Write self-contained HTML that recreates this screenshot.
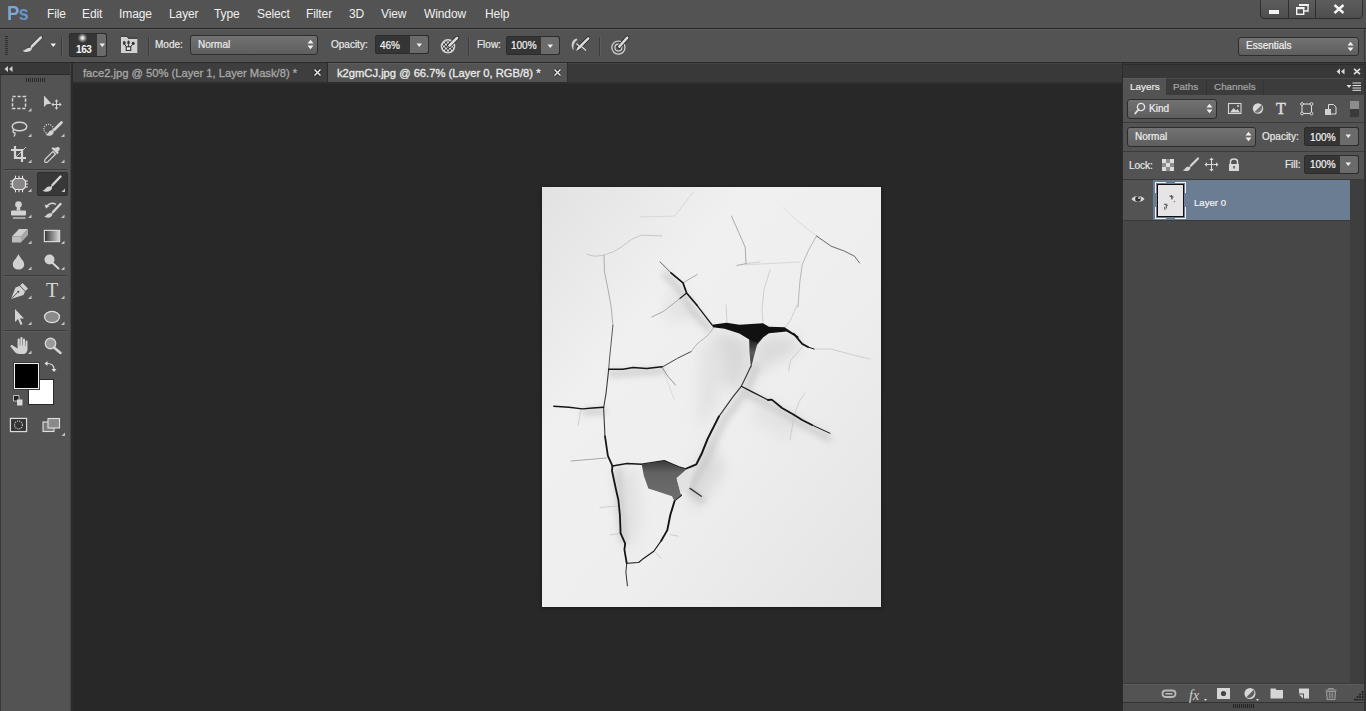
<!DOCTYPE html>
<html><head><meta charset="utf-8">
<style>
*{margin:0;padding:0;box-sizing:border-box}
html,body{width:1366px;height:711px;overflow:hidden;background:#282828;font-family:"Liberation Sans",sans-serif;color:#e6e6e6}
.a{position:absolute}
#menubar{left:0;top:0;width:1366px;height:28px;background:#535353}
#menuline{left:0;top:28px;width:1366px;height:1px;background:#262626}
#optbar{left:0;top:29px;width:1366px;height:33px;background:#535353;border-top:1px solid #5c5c5c}
#optline{left:0;top:62px;width:1366px;height:1px;background:#2a2a2a}
.mi{position:absolute;top:7px;font-size:12px;color:#f0f0f0;letter-spacing:-0.1px}
#tabbar{left:72px;top:63px;width:1050px;height:19px;background:#393939;border-top:1px solid #454545}
#toolpanel{left:0;top:63px;width:72px;height:648px;background:#535353}
#rightpanel{left:1122px;top:63px;width:244px;height:648px;background:#535353;border-top:1px solid #3a3a3a}
.lbl{font-size:10px;color:#e8e8e8;line-height:12px;white-space:nowrap;-webkit-text-stroke:0.2px currentColor}
.dd{background:linear-gradient(#727272,#5e5e5e);border:1px solid #2d2d2d;border-radius:3px}
.tabt{font-size:11.2px;line-height:13px;white-space:nowrap;-webkit-text-stroke:0.3px currentColor}
.ptab{font-size:9.9px;line-height:11px;white-space:nowrap;-webkit-text-stroke:0.2px currentColor}
#doc{left:542px;top:187px;width:339px;height:420px;background:#e4e4e4}
</style></head><body>
<div id="menubar" class="a">
  <div class="a" style="left:7px;top:2px;font-size:21px;line-height:22px;font-weight:bold;color:#7ea7d3;letter-spacing:-1px;transform:scaleX(0.88);transform-origin:0 0">P<span style="color:#6596c8">s</span></div>
  <span class="mi" style="left:47px">File</span>
  <span class="mi" style="left:82px">Edit</span>
  <span class="mi" style="left:119px">Image</span>
  <span class="mi" style="left:169px">Layer</span>
  <span class="mi" style="left:214px">Type</span>
  <span class="mi" style="left:257px">Select</span>
  <span class="mi" style="left:306px">Filter</span>
  <span class="mi" style="left:349px">3D</span>
  <span class="mi" style="left:381px">View</span>
  <span class="mi" style="left:424px">Window</span>
  <span class="mi" style="left:485px">Help</span>
</div>
<div id="menuline" class="a"></div>
<div id="optbar" class="a"></div>
<div class="a" style="left:0;top:29px;width:1366px;height:1px;background:#5e5e5e"></div>
<!-- grip -->
<div class="a" style="left:5px;top:36px;width:3px;height:20px;background:repeating-linear-gradient(to bottom,#2e2e2e 0 1px,transparent 1px 2px)"></div>
<!-- brush tool icon -->
<svg class="a" style="left:16px;top:32px" width="30" height="24" viewBox="16 32 30 24">
 <path d="M40.8 37.5 L31.5 46.8" stroke="#222" stroke-width="3.6" stroke-linecap="round"/>
 <path d="M40.8 37.5 L31.8 46.5" stroke="#d8d8d8" stroke-width="2.6" stroke-linecap="round"/>
 <path d="M31.5 46.5 L29.8 48 C28 47.8 26.5 48.5 25.5 49.5 C24.7 50.2 23.6 50.6 22.7 50.7 C24.5 52.3 28.5 52.4 30.8 50.5 C31.8 49.6 32.2 48.3 31.8 47 Z" fill="#d8d8d8"/>
</svg>
<svg class="a" style="left:50px;top:43px" width="7" height="5" viewBox="0 0 7 5"><path d="M0.5 0.5 H6 L3.25 4 Z" fill="#f0f0f0"/></svg>
<div class="a" style="left:61px;top:37px;width:1px;height:19px;background:#3c3c3c"></div>
<div class="a" style="left:62px;top:37px;width:1px;height:19px;background:#5d5d5d"></div>
<!-- brush size box -->
<div class="a" style="left:69px;top:33px;width:38px;height:24px;background:#353535;border-radius:2px;border:1px solid #2c2c2c"></div>
<div class="a" style="left:97px;top:34px;width:9px;height:22px;background:#6b6b6b;border-radius:0 2px 2px 0"></div>
<svg class="a" style="left:99px;top:43px" width="7" height="5" viewBox="0 0 7 5"><path d="M0.5 0.5 H6 L3.25 4 Z" fill="#f0f0f0"/></svg>
<div class="a" style="left:77px;top:33px;width:11px;height:10px;background:radial-gradient(circle at 50% 50%,#ffffff 0,#cfcfcf 1.5px,#7a7a7a 3px,rgba(53,53,53,0) 5px)"></div>
<div class="a" style="left:76px;top:45px;font-size:10px;font-weight:bold;color:#f4f4f4;line-height:10px;letter-spacing:-0.4px">163</div>
<!-- folder/brush panel icon -->
<svg class="a" style="left:112px;top:30px" width="30" height="30" viewBox="112 30 30 30">
 <path d="M121 36.3 H127 L128.3 38.3 H137.3 V53 H121 Z" fill="#d2d2d2"/>
 <path d="M121 36.3 H127 L128.3 38.3 H137.3" fill="none" stroke="#1e1e1e" stroke-width="0.9"/>
 <ellipse cx="124.3" cy="43" rx="1.4" ry="1.9" fill="#333"/>
 <ellipse cx="128.5" cy="42.6" rx="1.2" ry="2" fill="#333"/>
 <ellipse cx="133.2" cy="43.4" rx="1.5" ry="1.7" fill="#333"/>
 <path d="M124.8 44.5 L126.6 46.8 M128.5 44.5 V46.8 M132.3 44.8 L130.4 46.8" stroke="#2a2a2a" stroke-width="1"/>
 <rect x="126.2" y="46.8" width="4.6" height="3.6" fill="#e8e8e8" stroke="#222" stroke-width="1"/>
</svg>
<div class="a" style="left:148px;top:37px;width:1px;height:19px;background:#3c3c3c"></div>
<div class="a" style="left:149px;top:37px;width:1px;height:19px;background:#5d5d5d"></div>
<div class="a lbl" style="left:155px;top:39px">Mode:</div>
<div class="a dd" style="left:190px;top:35px;width:128px;height:20px"></div>
<div class="a lbl" style="left:198px;top:39px;color:#ececec">Normal</div>
<svg class="a" style="left:307px;top:39px" width="7" height="11" viewBox="0 0 7 11"><path d="M0.5 4.5 L3.5 0.8 L6.5 4.5 Z M0.5 6.5 L3.5 10.2 L6.5 6.5 Z" fill="#efefef"/></svg>
<div class="a lbl" style="left:331px;top:39px">Opacity:</div>
<div class="a" style="left:375px;top:35px;width:54px;height:19px;background:#353535;border-radius:2px;border:1px solid #2c2c2c"></div>
<div class="a" style="left:410px;top:36px;width:18px;height:17px;background:#6b6b6b;border-radius:0 2px 2px 0"></div>
<svg class="a" style="left:416px;top:43px" width="7" height="5" viewBox="0 0 7 5"><path d="M0.5 0.5 H6 L3.25 4 Z" fill="#f0f0f0"/></svg>
<div class="a lbl" style="left:380px;top:40px;color:#f4f4f4">46%</div>
<!-- pressure opacity icon -->
<svg class="a" style="left:440px;top:36px" width="20" height="19" viewBox="0 0 20 19">
 <defs><pattern id="chk" x="1" y="3.5" width="4" height="4" patternUnits="userSpaceOnUse"><rect width="4" height="4" fill="#3a3a3a"/><rect width="2" height="2" fill="#d8d8d8"/><rect x="2" y="2" width="2" height="2" fill="#d8d8d8"/></pattern></defs>
 <circle cx="8" cy="10.3" r="6.6" fill="url(#chk)" stroke="#d6d6d6" stroke-width="1.4"/>
 <path d="M17 2 L9.5 9.5" stroke="#1e1e1e" stroke-width="4.2" stroke-linecap="round"/>
 <path d="M17 2 L9.5 9.5" stroke="#dadada" stroke-width="2.8" stroke-linecap="round"/>
</svg>
<div class="a" style="left:468px;top:37px;width:1px;height:19px;background:#3c3c3c"></div>
<div class="a" style="left:469px;top:37px;width:1px;height:19px;background:#5d5d5d"></div>
<div class="a lbl" style="left:477px;top:39px">Flow:</div>
<div class="a" style="left:506px;top:36px;width:54px;height:19px;background:#353535;border-radius:2px;border:1px solid #2c2c2c"></div>
<div class="a" style="left:541px;top:37px;width:18px;height:17px;background:#6b6b6b;border-radius:0 2px 2px 0"></div>
<svg class="a" style="left:547px;top:44px" width="7" height="5" viewBox="0 0 7 5"><path d="M0.5 0.5 H6 L3.25 4 Z" fill="#f0f0f0"/></svg>
<div class="a lbl" style="left:511px;top:40px;color:#f4f4f4">100%</div>
<!-- airbrush icon -->
<svg class="a" style="left:565px;top:32px" width="30" height="24" viewBox="565 32 30 24">
 <path d="M576.5 38.5 C571.5 39.5 570 46.5 573.8 50.5 C572.8 46.5 573.8 42 577.5 40 Z" fill="#d0d0d0"/>
 <path d="M588.3 38.3 L578 48.6" stroke="#1e1e1e" stroke-width="4" stroke-linecap="round"/>
 <path d="M588.3 38.3 L578 48.6" stroke="#dcdcdc" stroke-width="2.6" stroke-linecap="round"/>
 <path d="M576.5 43.5 L581 48 M576.5 50.5 L583.5 43.5 M581.5 46.5 L586 50.5" stroke="#dcdcdc" stroke-width="1.1"/>
</svg>
<div class="a" style="left:599px;top:37px;width:1px;height:19px;background:#3c3c3c"></div>
<div class="a" style="left:600px;top:37px;width:1px;height:19px;background:#5d5d5d"></div>
<!-- pressure size icon -->
<svg class="a" style="left:605px;top:32px" width="30" height="24" viewBox="605 32 30 24">
 <circle cx="618.4" cy="47.6" r="6.6" fill="none" stroke="#d6d6d6" stroke-width="1.2"/>
 <circle cx="618.4" cy="47.6" r="3.5" fill="none" stroke="#d6d6d6" stroke-width="1.2"/>
 <path d="M627.3 37.6 L619.3 46.6" stroke="#1e1e1e" stroke-width="4" stroke-linecap="round"/>
 <path d="M627.3 37.6 L619.3 46.6" stroke="#dcdcdc" stroke-width="2.6" stroke-linecap="round"/>
</svg>
<!-- essentials -->
<div class="a dd" style="left:1238px;top:37px;width:121px;height:19px"></div>
<div class="a lbl" style="left:1246px;top:40px;color:#f0f0f0">Essentials</div>
<svg class="a" style="left:1347px;top:41px" width="7" height="11" viewBox="0 0 7 11"><path d="M0.5 4.5 L3.5 0.8 L6.5 4.5 Z M0.5 6.5 L3.5 10.2 L6.5 6.5 Z" fill="#efefef"/></svg>
<div class="a" style="left:1364px;top:29px;width:1px;height:33px;background:#3a3a3a"></div>
<!-- window controls -->
<div class="a" style="left:1260px;top:-3px;width:103px;height:22px;border:1px solid #2e2e2e;border-radius:0 0 4px 4px;background:linear-gradient(#5e5e5e,#4e4e4e)"></div>
<div class="a" style="left:1288px;top:0;width:1px;height:18px;background:#2e2e2e"></div>
<div class="a" style="left:1315px;top:0;width:1px;height:18px;background:#2e2e2e"></div>
<div class="a" style="left:1269px;top:10px;width:10px;height:4px;background:#f2f2f2"></div>
<svg class="a" style="left:1290px;top:0" width="24" height="18" viewBox="1290 0 24 18"><path d="M1299.7 4.7 H1308 V11 H1303.5" fill="none" stroke="#f2f2f2" stroke-width="1.4"/><rect x="1299" y="4" width="9.7" height="2" fill="#f2f2f2"/><rect x="1296.7" y="7.7" width="7" height="6.6" fill="none" stroke="#f2f2f2" stroke-width="1.4"/><rect x="1296" y="7" width="8.4" height="2.2" fill="#f2f2f2"/></svg>
<svg class="a" style="left:1333px;top:4px" width="12" height="10" viewBox="0 0 12 10"><path d="M1.5 1 L10.5 9 M10.5 1 L1.5 9" stroke="#f4f4f4" stroke-width="2.4"/></svg>

<div id="optline" class="a"></div>
<div id="tabbar" class="a"></div>
<div class="a" style="left:72px;top:63px;width:255px;height:19px;background:#3e3e3e;border-left:1px solid #2f2f2f"></div>
<div class="a" style="left:327px;top:63px;width:1px;height:19px;background:#2c2c2c"></div>
<div class="a" style="left:328px;top:63px;width:239px;height:19px;background:#535353;border-top:1px solid #5e5e5e"></div>
<div class="a" style="left:567px;top:63px;width:1px;height:19px;background:#2e2e2e"></div>
<div class="a" style="left:72px;top:82px;width:1050px;height:2px;background:#2e2e2e"></div>
<div class="a tabt" style="left:83px;top:67px;color:#a8a8a8">face2.jpg @ 50% (Layer 1, Layer Mask/8) *</div>
<div class="a tabt" style="left:337px;top:67px;color:#ececec">k2gmCJ.jpg @ 66.7% (Layer 0, RGB/8) *</div>
<svg class="a" style="left:313px;top:68px" width="9" height="9" viewBox="0 0 9 9"><path d="M1.5 1.5 L7.5 7.5 M7.5 1.5 L1.5 7.5" stroke="#111" stroke-width="2.6"/><path d="M1.5 1.5 L7.5 7.5 M7.5 1.5 L1.5 7.5" stroke="#e8e8e8" stroke-width="1.6"/></svg>
<svg class="a" style="left:553px;top:68px" width="9" height="9" viewBox="0 0 9 9"><path d="M1.5 1.5 L7.5 7.5 M7.5 1.5 L1.5 7.5" stroke="#111" stroke-width="2.6"/><path d="M1.5 1.5 L7.5 7.5 M7.5 1.5 L1.5 7.5" stroke="#e8e8e8" stroke-width="1.6"/></svg>

<div id="toolpanel" class="a"></div>
<div class="a" style="left:0;top:63px;width:72px;height:12px;background:#383838;border-bottom:1px solid #2a2a2a"></div>
<div class="a" style="left:0;top:75px;width:1px;height:636px;background:#3a3a3a"></div>
<div class="a" style="left:70px;top:63px;width:1px;height:648px;background:#454545"></div>
<div class="a" style="left:71px;top:63px;width:2px;height:648px;background:#2c2c2c"></div>
<svg class="a" style="left:4px;top:66px" width="9" height="6" viewBox="0 0 9 6"><path d="M4 0 V6 L0.5 3 Z M8.5 0 V6 L5 3 Z" fill="#d0d0d0"/></svg>
<div class="a" style="left:26px;top:78px;width:20px;height:4px;background:repeating-linear-gradient(to right,#2a2a2a 0 1px,transparent 1px 2px)"></div>
<div class="a" style="left:4px;top:169px;width:63px;height:1px;background:#3a3a3a"></div>
<div class="a" style="left:4px;top:170px;width:63px;height:1px;background:#5c5c5c"></div>
<div class="a" style="left:4px;top:275px;width:63px;height:1px;background:#3a3a3a"></div>
<div class="a" style="left:4px;top:276px;width:63px;height:1px;background:#5c5c5c"></div>
<div class="a" style="left:4px;top:330px;width:63px;height:1px;background:#3a3a3a"></div>
<div class="a" style="left:4px;top:331px;width:63px;height:1px;background:#5c5c5c"></div>
<div class="a" style="left:37px;top:172px;width:31px;height:24px;background:#383838;border-radius:2px;border:1px solid #303030"></div>
<svg class="a" style="left:0;top:0" width="72" height="450" viewBox="0 0 72 450">
 <g fill="none" stroke="#d6d6d6">
  <rect x="12.5" y="96.5" width="13" height="12" stroke-width="1.5" stroke-dasharray="3.2 1.8"/>
  <path d="M56.5 100.5 V108.5 M52.5 104.5 H60.5" stroke-width="1.1"/>
  <ellipse cx="19.5" cy="126.5" rx="7.3" ry="4.3" stroke-width="1.4"/>
  <path d="M14 129.5 C12 131 13 133 15 133 C15.5 134 14.5 135.5 14 136.5" stroke-width="1.3"/>
  <circle cx="48.5" cy="129" r="4.6" stroke-width="1.3" stroke-dasharray="1.1 1.2"/>
  <path d="M15 146 V158 H26 M11 150 H22 V162" stroke-width="2.2"/>
  <path d="M16 157 L26 147" stroke-width="0.9"/>
  <path d="M13 218 H25.5" stroke-width="1.2"/>
  <rect x="44.5" y="230.5" width="15" height="11" stroke-width="1.4"/>
  <path d="M50 113 Z" />
  <rect x="10.5" y="418.5" width="16" height="13" stroke-width="1.3"/>
  <circle cx="18.5" cy="425" r="4" stroke-width="1.2" stroke-dasharray="1 1.1"/>
  <path d="M51 359.5 H47 M47 359.5 L49 357.5 M47 359.5 L49 361.5" stroke-width="0"/>
 </g>
 <g fill="#d2d2d2">
  <path d="M44 95.5 L44 107 L46.8 104.3 L51.5 103.8 Z"/>
  <path d="M56.5 99.3 L54.6 101.5 H58.4 Z M56.5 109.7 L54.6 107.5 H58.4 Z M51.3 104.5 L53.5 102.6 V106.4 Z M61.7 104.5 L59.5 102.6 V106.4 Z"/>
  <!-- quick select brush -->
  <path d="M61.5 122.5 L54.5 129.5" stroke="#d6d6d6" stroke-width="2.6" stroke-linecap="round"/>
  <path d="M54.5 128.5 L52.5 130.5 C51 130 49.5 131 48.5 132.5 C47.8 133.8 46.5 134.6 45.5 134.8 C48 136.6 51.5 136 53 134 C53.6 133 53.8 132 53.6 131.3 Z"/>
  <!-- eyedropper -->
  <path d="M56.5 147.5 C58.5 146 60.8 148.3 59.3 150.3 L57.8 151.8 L58.8 152.8 L57.3 154.3 L51.5 148.5 L53 147 L54 148 Z"/>
  <path d="M52.8 151.5 L55.5 154.2 L48 161.7 C47 162.7 45.3 162.7 45 162 C44.5 161.5 44.5 160.5 45.3 159 Z" fill="none" stroke="#d6d6d6" stroke-width="1.2"/>
  <!-- healing -->
  <path d="M15 178.5 H23 L25.5 181 V187 L23 189.5 H15 L12.5 187 V181 Z" fill="#8a8585" stroke="#e6e6e6" stroke-width="1.2"/>
  <path d="M15.5 175.8 V178.5 M19 175.8 V178.5 M22.5 175.8 V178.5 M15.5 189.5 V192.2 M19 189.5 V192.2 M22.5 189.5 V192.2 M10 181 H12.5 M10 184 H12.5 M10 187 H12.5 M25.5 181 H28 M25.5 184 H28 M25.5 187 H28" stroke="#e6e6e6" stroke-width="1.1" fill="none"/>
  <!-- brush selected -->
  <path d="M60.5 176.5 L52.5 185" stroke="#d6d6d6" stroke-width="2.4" stroke-linecap="round"/>
  <path d="M53 184 L50.3 186.7 C49 186 47 186.5 46 188 C45 189.5 43.7 190.2 42.5 190.4 C45 192.3 49.5 192.2 51.3 189.8 C52 188.8 52.3 187.8 52 187 Z"/>
  <!-- stamp -->
  <circle cx="18.5" cy="204.5" r="3.3"/>
  <path d="M17 207 H20 L20.5 210.5 H16.5 Z"/>
  <rect x="11" y="210.5" width="15" height="5" rx="1"/>
  <!-- history brush -->
  <path d="M60.5 204 L53 212" stroke="#d6d6d6" stroke-width="2.4" stroke-linecap="round"/>
  <path d="M53.3 211.2 L51 213.4 C49.8 212.8 48 213.3 47 214.6 C46.2 215.8 45 216.4 44 216.6 C46.3 218.3 50.2 218.1 51.8 216 C52.4 215.2 52.6 214.3 52.4 213.6 Z"/>
  <path d="M56 204.5 C53 202.5 48.5 203 46.5 206.5" stroke="#d6d6d6" stroke-width="1.4" fill="none"/>
  <path d="M44.5 204.5 L46 208.5 L49.5 206 Z"/>
  <!-- eraser -->
  <path d="M12 236.5 L19 229 H28 L21 236.5 Z" fill="#cfcfcf"/>
  <path d="M12 236.5 H21 V242.5 H12 Z" fill="#bdbdbd"/>
  <path d="M21 236.5 L28 229 V235 L21 242.5 Z" fill="#a8a8a8"/>
  <!-- drop -->
  <path d="M18.5 254 C17 258 12.8 261 12.8 264.2 C12.8 267.5 15.5 269.5 18.5 269.5 C21.5 269.5 24.2 267.5 24.2 264.2 C24.2 261 20 258 18.5 254 Z"/>
  <!-- dodge -->
  <circle cx="49.5" cy="259.5" r="5"/>
  <path d="M52 262.5 L58.5 268.5" stroke="#d6d6d6" stroke-width="2" stroke-linecap="round"/>
  <!-- pen -->
  <path d="M22.5 283 L28 288.5 L25.5 291 L20 285.5 Z"/>
  <path d="M19.5 286 L25 291.5 L23.5 295 L11 299 L15.5 287.5 Z"/>
  <path d="M11.5 298.5 L17.8 292.2" stroke="#555" stroke-width="0.9"/>
  <circle cx="18.3" cy="291.7" r="1" fill="#444"/>
  <!-- arrow -->
  <path d="M15 309 V322 L18 319 L20.5 325 L22.5 324 L20 318.5 H24 Z"/>
  <!-- ellipse -->
  <ellipse cx="52" cy="317" rx="7.5" ry="5.6" fill="#8a8a8a" stroke="#e2e2e2" stroke-width="1.2"/>
  <!-- hand -->
  <path d="M13.5 346 C12 344 10 345 10.5 346.5 L14.5 351.5 C15.5 353 17 354 19.5 354 H23 C25.5 354 27.5 352 27.5 349 V341.5 C27.5 340 25.5 340 25.5 341.5 V346 H25 V339.5 C25 338 23 338 23 339.5 V345.5 H22.5 V338.3 C22.5 336.7 20.3 336.7 20.3 338.3 V345.5 H19.8 V339.5 C19.8 338 17.6 338 17.6 339.5 V348.5 Z"/>
  <!-- zoom -->
  <circle cx="50.5" cy="343.5" r="5.2" fill="#9a9a9a" stroke="#d6d6d6" stroke-width="1.4"/>
  <path d="M54 347.5 L60.5 353" stroke="#d6d6d6" stroke-width="2.4" stroke-linecap="round"/>
  <!-- swap arrows -->
  <path d="M47 363.5 C51 363.5 54 365.5 54 369" stroke="#e0e0e0" stroke-width="1.2" fill="none"/>
  <path d="M44.5 363.5 L47.5 361 V366 Z M54 372 L51.5 369 H56.5 Z" fill="#e0e0e0"/>
  <!-- screen mode -->
  <rect x="43" y="422" width="11" height="9.5" fill="#7a7a7a" stroke="#e0e0e0" stroke-width="1.1"/>
  <rect x="48" y="418.5" width="11.5" height="9.5" fill="#8a8a8a" stroke="#e0e0e0" stroke-width="1.1"/>
 </g>
 <path d="M13.5 395.5 H19 V401 H13.5 Z" fill="#222" stroke="#ddd" stroke-width="0.8"/>
 <path d="M17 399.5 H22.5 V405.5 H17 Z" fill="#d8d8d8"/>
 <rect x="11" y="419" width="15" height="12" fill="#333" />
 <rect x="10.5" y="418.5" width="16" height="13" fill="none" stroke="#dcdcdc" stroke-width="1.1"/>
 <circle cx="18.5" cy="425" r="4" fill="none" stroke="#e0e0e0" stroke-width="1.1" stroke-dasharray="1 1.1"/>
 <path d="M31.5 111.5 L31.5 108.0 L28.0 111.5 Z" fill="#c4c4c4"/><path d="M31.5 137 L31.5 133.5 L28.0 137 Z" fill="#c4c4c4"/><path d="M31.5 163 L31.5 159.5 L28.0 163 Z" fill="#c4c4c4"/><path d="M31.5 192 L31.5 188.5 L28.0 192 Z" fill="#c4c4c4"/><path d="M64.5 137 L64.5 133.5 L61.0 137 Z" fill="#c4c4c4"/><path d="M64.5 163 L64.5 159.5 L61.0 163 Z" fill="#c4c4c4"/><path d="M65 192 L65 188.5 L61.5 192 Z" fill="#c4c4c4"/><path d="M31.5 218 L31.5 214.5 L28.0 218 Z" fill="#c4c4c4"/><path d="M64.5 218 L64.5 214.5 L61.0 218 Z" fill="#c4c4c4"/><path d="M31.5 244 L31.5 240.5 L28.0 244 Z" fill="#c4c4c4"/><path d="M64.5 244 L64.5 240.5 L61.0 244 Z" fill="#c4c4c4"/><path d="M31.5 270 L31.5 266.5 L28.0 270 Z" fill="#c4c4c4"/><path d="M64.5 270 L64.5 266.5 L61.0 270 Z" fill="#c4c4c4"/><path d="M31.5 299 L31.5 295.5 L28.0 299 Z" fill="#c4c4c4"/><path d="M64.5 299 L64.5 295.5 L61.0 299 Z" fill="#c4c4c4"/><path d="M31.5 325 L31.5 321.5 L28.0 325 Z" fill="#c4c4c4"/><path d="M64.5 325 L64.5 321.5 L61.0 325 Z" fill="#c4c4c4"/><path d="M31.5 354 L31.5 350.5 L28.0 354 Z" fill="#c4c4c4"/><path d="M65 436 L65 432.5 L61.5 436 Z" fill="#c4c4c4"/>
</svg>
<!-- gradient fill -->
<div class="a" style="left:45px;top:231px;width:14px;height:10px;background:linear-gradient(to right,#3a3a3a,#d0d0d0)"></div>
<div class="a" style="left:46px;top:280px;font-family:'Liberation Serif',serif;font-size:20px;line-height:20px;color:#d6d6d6">T</div>
<!-- colors -->
<div class="a" style="left:28px;top:379px;width:26px;height:26px;background:#fff;border:1px solid #2a2a2a"></div>
<div class="a" style="left:13px;top:362px;width:27px;height:28px;background:#000;border:1px solid #3a3a3a;box-shadow:inset 0 0 0 1px #f0f0f0"></div>

<div id="rightpanel" class="a"></div>
<div class="a" style="left:1122px;top:63px;width:1px;height:648px;background:#2c2c2c"></div>
<div class="a" style="left:1123px;top:64px;width:241px;height:14px;background:#383838;border-top:1px solid #2c2c2c"></div>
<div class="a" style="left:1123px;top:78px;width:241px;height:17px;background:#3c3c3c;border-top:1px solid #4a4a4a"></div>
<div class="a" style="left:1123px;top:78px;width:43px;height:17px;background:#535353;border-top:1px solid #5c5c5c"></div>
<div class="a" style="left:1206px;top:79px;width:1px;height:16px;background:#333"></div>
<div class="a" style="left:1263px;top:79px;width:1px;height:16px;background:#333"></div>
<div class="a" style="left:1364px;top:63px;width:2px;height:648px;background:#333"></div>
<div class="a ptab" style="left:1130px;top:81px;color:#ececec">Layers</div>
<div class="a ptab" style="left:1173px;top:81px;color:#a6a6a6">Paths</div>
<div class="a ptab" style="left:1214px;top:81px;color:#a6a6a6">Channels</div>
<svg class="a" style="left:1336px;top:68px" width="9" height="7" viewBox="0 0 9 7"><path d="M4 0.5 V6.5 L0.5 3.5 Z M8.5 0.5 V6.5 L5 3.5 Z" fill="#d8d8d8"/></svg>
<svg class="a" style="left:1353px;top:68px" width="8" height="7" viewBox="0 0 8 7"><path d="M1 0.8 L7 6.2 M7 0.8 L1 6.2" stroke="#e0e0e0" stroke-width="1.6"/></svg>
<svg class="a" style="left:1346px;top:82px" width="16" height="9" viewBox="0 0 16 9"><path d="M0.5 3 H5.5 L3 6 Z" fill="#e0e0e0"/><path d="M6.5 1 H15 M6.5 3.5 H15 M6.5 6 H15 M6.5 8.3 H15" stroke="#e0e0e0" stroke-width="1"/></svg>
<!-- filter row -->
<div class="a" style="left:1123px;top:122px;width:241px;height:1px;background:#3a3a3a"></div>
<div class="a dd" style="left:1127px;top:99px;width:90px;height:20px"></div>
<svg class="a" style="left:1134px;top:102px" width="12" height="13" viewBox="0 0 12 13"><circle cx="7" cy="5" r="3.6" fill="none" stroke="#e6e6e6" stroke-width="1.4"/><path d="M4.5 7.5 L1.2 11.5" stroke="#e6e6e6" stroke-width="1.8" stroke-linecap="round"/></svg>
<div class="a lbl" style="left:1149px;top:103px;color:#efefef">Kind</div>
<svg class="a" style="left:1206px;top:103px" width="7" height="11" viewBox="0 0 7 11"><path d="M0.5 4.5 L3.5 0.8 L6.5 4.5 Z M0.5 6.5 L3.5 10.2 L6.5 6.5 Z" fill="#efefef"/></svg>
<svg class="a" style="left:1222px;top:98px" width="142" height="22" viewBox="1222 98 142 22">
 <rect x="1228.5" y="103.5" width="12.5" height="10" fill="none" stroke="#d8d8d8" stroke-width="1.1"/>
 <path d="M1230 112.5 L1233.5 108 L1236 110.5 L1237.5 109 L1240 112.5 Z" fill="#d8d8d8"/>
 <circle cx="1238" cy="106" r="1" fill="#d8d8d8"/>
 <circle cx="1258" cy="108.5" r="5.2" fill="#d8d8d8"/>
 <path d="M1254.5 112 L1261.5 105 A5.2 5.2 0 0 1 1254.5 112 Z" fill="#707070"/>
 <text x="1276" y="114" font-family="Liberation Serif" font-size="16" fill="#e0e0e0" stroke="#e0e0e0" stroke-width="0.4">T</text>
 <rect x="1302" y="104" width="9.5" height="9.5" fill="none" stroke="#d8d8d8" stroke-width="1.1"/>
 <circle cx="1302" cy="104" r="1.4" fill="#535353" stroke="#e0e0e0" stroke-width="0.9"/>
 <circle cx="1311.5" cy="104" r="1.4" fill="#535353" stroke="#e0e0e0" stroke-width="0.9"/>
 <circle cx="1302" cy="113.5" r="1.4" fill="#535353" stroke="#e0e0e0" stroke-width="0.9"/>
 <circle cx="1311.5" cy="113.5" r="1.4" fill="#535353" stroke="#e0e0e0" stroke-width="0.9"/>
 <path d="M1328.5 109 V104.5 H1333.5 L1336 107 V114 H1331" fill="none" stroke="#dcdcdc" stroke-width="1"/>
 <rect x="1325" y="109" width="6" height="6" fill="#d0d0d0"/>
 <rect x="1350" y="101" width="9" height="8" fill="#8c8c8c"/>
 <rect x="1350" y="109" width="9" height="8" fill="#3a3a3a"/>
</svg>
<!-- blend row -->
<div class="a dd" style="left:1127px;top:127px;width:129px;height:20px"></div>
<div class="a lbl" style="left:1135px;top:131px;color:#efefef">Normal</div>
<svg class="a" style="left:1245px;top:131px" width="7" height="11" viewBox="0 0 7 11"><path d="M0.5 4.5 L3.5 0.8 L6.5 4.5 Z M0.5 6.5 L3.5 10.2 L6.5 6.5 Z" fill="#efefef"/></svg>
<div class="a lbl" style="left:1262px;top:131px">Opacity:</div>
<div class="a" style="left:1304px;top:127px;width:55px;height:19px;background:#353535;border-radius:2px;border:1px solid #2c2c2c"></div>
<div class="a" style="left:1340px;top:128px;width:18px;height:17px;background:#6b6b6b;border-radius:0 2px 2px 0"></div>
<svg class="a" style="left:1345px;top:134px" width="7" height="5" viewBox="0 0 7 5"><path d="M0.5 0.5 H6 L3.25 4 Z" fill="#f0f0f0"/></svg>
<div class="a lbl" style="left:1310px;top:132px;color:#f4f4f4">100%</div>
<div class="a" style="left:1123px;top:151px;width:241px;height:1px;background:#3a3a3a"></div>
<!-- lock row -->
<div class="a lbl" style="left:1129px;top:160px">Lock:</div>
<svg class="a" style="left:1160px;top:156px" width="82" height="18" viewBox="1160 156 82 18">
 <rect x="1162" y="159" width="12" height="12" fill="#8c8c8c"/><path d="M1162 159 h4 v4 h-4 Z M1170 159 h4 v4 h-4 Z M1166 163 h4 v4 h-4 Z M1162 167 h4 v4 h-4 Z M1170 167 h4 v4 h-4 Z" fill="#dcdcdc"/>
 <path d="M1198 158.5 L1191 165.5" stroke="#d6d6d6" stroke-width="2.2" stroke-linecap="round"/>
 <path d="M1191.5 164.7 L1189.3 167 C1188 166.5 1186.3 167 1185.4 168.2 C1184.6 169.3 1183.5 169.9 1182.5 170 C1184.6 171.6 1188.3 171.5 1189.8 169.5 C1190.4 168.7 1190.6 167.8 1190.4 167.2 Z" fill="#d6d6d6"/>
 <path d="M1211.5 158 V171 M1205 164.5 H1218" stroke="#d8d8d8" stroke-width="1.1"/>
 <path d="M1211.5 157.5 L1209.3 160 H1213.7 Z M1211.5 171.5 L1209.3 169 H1213.7 Z M1204.5 164.5 L1207 162.3 V166.7 Z M1218.5 164.5 L1216 162.3 V166.7 Z" fill="#d8d8d8"/>
 <path d="M1230.5 164 V161.5 C1230.5 158.3 1237.5 158.3 1237.5 161.5 V164" fill="none" stroke="#d8d8d8" stroke-width="1.5"/>
 <rect x="1229" y="164" width="10" height="7" fill="#d8d8d8"/>
 <rect x="1233.3" y="166" width="1.5" height="2.5" fill="#555"/>
</svg>
<div class="a lbl" style="left:1285px;top:159px">Fill:</div>
<div class="a" style="left:1304px;top:155px;width:55px;height:19px;background:#353535;border-radius:2px;border:1px solid #2c2c2c"></div>
<div class="a" style="left:1340px;top:156px;width:18px;height:17px;background:#6b6b6b;border-radius:0 2px 2px 0"></div>
<svg class="a" style="left:1345px;top:162px" width="7" height="5" viewBox="0 0 7 5"><path d="M0.5 0.5 H6 L3.25 4 Z" fill="#f0f0f0"/></svg>
<div class="a lbl" style="left:1310px;top:159px;color:#f4f4f4">100%</div>
<!-- layers list -->
<div class="a" style="left:1123px;top:180px;width:227px;height:503px;background:#474747"></div>
<div class="a" style="left:1123px;top:179px;width:241px;height:1px;background:#3a3a3a"></div>
<div class="a" style="left:1350px;top:180px;width:14px;height:503px;background:#3e3e3e"></div>
<div class="a" style="left:1123px;top:180px;width:30px;height:40px;background:#535353"></div>
<div class="a" style="left:1153px;top:180px;width:197px;height:40px;background:#6b7d93"></div>
<div class="a" style="left:1123px;top:220px;width:227px;height:1px;background:#3a3a3a"></div>
<svg class="a" style="left:1130px;top:193px" width="16" height="12" viewBox="0 0 16 12"><path d="M1.5 6 C4 2 12 2 14.5 6 C12 10 4 10 1.5 6 Z" fill="#d8d8d8"/><circle cx="8" cy="6" r="2.8" fill="#333"/><circle cx="9" cy="5" r="1" fill="#ddd"/></svg>
<div class="a" style="left:1155px;top:182px;width:31px;height:37px;border:1px solid #f0f0f0"></div>
<div class="a" style="left:1166px;top:181px;width:9px;height:39px;background:#6b7d93"></div>
<div class="a" style="left:1154px;top:193px;width:33px;height:14px;background:#6b7d93"></div>
<div class="a" style="left:1157px;top:184px;width:27px;height:33px;background:#111"></div>
<div class="a" style="left:1158px;top:185px;width:25px;height:31px;background:#ebebeb"></div>
<svg class="a" style="left:1158px;top:185px" width="25" height="31" viewBox="0 0 25 31"><rect width="25" height="31" fill="#e6e4e4"/><path d="M11.5 11 L15.5 12.2 M13.5 10 L14 14.5" stroke="#555" stroke-width="1.3" fill="none"/><path d="M6 19 L10 20.5 M8 18.5 L8.5 23.5 M6.5 22 L7 25" stroke="#666" stroke-width="1.2" fill="none"/><circle cx="16.5" cy="16.5" r="0.7" fill="#777"/></svg>
<div class="a lbl" style="left:1194px;top:197px;font-size:9.6px;color:#f0f0f0">Layer 0</div>
<!-- bottom bar -->
<div class="a" style="left:1123px;top:683px;width:241px;height:1px;background:#3a3a3a"></div>
<div class="a" style="left:1123px;top:684px;width:241px;height:19px;background:#535353;border-top:1px solid #5c5c5c"></div>
<div class="a" style="left:1123px;top:702px;width:241px;height:1px;background:#333"></div>
<div class="a" style="left:1123px;top:703px;width:241px;height:8px;background:#4a4a4a"></div>
<div class="a" style="left:1233px;top:704px;width:21px;height:4px;background:repeating-linear-gradient(to right,#222 0 1px,transparent 1px 2px)"></div>
<svg class="a" style="left:1155px;top:685px" width="209" height="18" viewBox="1155 685 209 18">
 <rect x="1162.5" y="690.5" width="13" height="6.5" rx="3.2" fill="none" stroke="#b8b8b8" stroke-width="1.8"/>
 <path d="M1165.5 693.8 H1172.5" stroke="#b8b8b8" stroke-width="1.6"/>
 <text x="1189" y="699.5" font-family="Liberation Serif" font-style="italic" font-size="14" fill="#d0d0d0">fx</text>
 <path d="M1204 699 H1207 L1205.5 701 Z" fill="#e0e0e0"/>
 <rect x="1217" y="688" width="13" height="11" fill="#d6d6d6"/>
 <circle cx="1223.5" cy="693.5" r="2.6" fill="#444"/>
 <circle cx="1250" cy="693.5" r="5.5" fill="#d6d6d6"/>
 <path d="M1246.3 697.2 L1253.7 689.8 A5.5 5.5 0 0 1 1246.3 697.2 Z" fill="#606060"/>
 <path d="M1256 699 H1259 L1257.5 701 Z" fill="#e0e0e0"/>
 <path d="M1270.5 688.5 H1275.5 L1276.5 690 H1283 V698.5 H1270.5 Z" fill="#d6d6d6"/>
 <path d="M1299 688.5 H1309 V698.5 H1304 V693.5 H1299 Z" fill="#d6d6d6"/>
 <path d="M1299 694.5 H1303 V698.5 Z" fill="#d6d6d6"/>
 <path d="M1325.5 690 H1336.5 M1329 690 V688.5 H1333 V690" stroke="#9a9a9a" stroke-width="1.2" fill="none"/>
 <path d="M1326.5 691.5 H1335.5 L1334.8 699.5 H1327.2 Z" fill="none" stroke="#9a9a9a" stroke-width="1.2"/>
 <path d="M1329.3 692.5 V698.5 M1331 692.5 V698.5 M1332.7 692.5 V698.5" stroke="#9a9a9a" stroke-width="0.9"/>
 <rect x="1361.8" y="691.0" width="1.7" height="1.7" fill="#1c1c1c"/><rect x="1359.2" y="693.6" width="1.7" height="1.7" fill="#1c1c1c"/><rect x="1361.8" y="693.6" width="1.7" height="1.7" fill="#1c1c1c"/><rect x="1356.6" y="696.2" width="1.7" height="1.7" fill="#1c1c1c"/><rect x="1359.2" y="696.2" width="1.7" height="1.7" fill="#1c1c1c"/><rect x="1361.8" y="696.2" width="1.7" height="1.7" fill="#1c1c1c"/><rect x="1354.0" y="698.8" width="1.7" height="1.7" fill="#1c1c1c"/><rect x="1356.6" y="698.8" width="1.7" height="1.7" fill="#1c1c1c"/><rect x="1359.2" y="698.8" width="1.7" height="1.7" fill="#1c1c1c"/><rect x="1361.8" y="698.8" width="1.7" height="1.7" fill="#1c1c1c"/>
</svg>

<svg id="docsvg" class="a" style="left:542px;top:187px;box-shadow:0 1px 4px rgba(0,0,0,0.45)" width="339" height="420" viewBox="542 187 339 420">
 <defs>
  <linearGradient id="bg" x1="0" y1="0" x2="1" y2="1">
   <stop offset="0" stop-color="#e2e2e2"/><stop offset="0.3" stop-color="#f0f0f0"/><stop offset="0.6" stop-color="#eeeeee"/><stop offset="1" stop-color="#e3e3e3"/>
  </linearGradient>
  <linearGradient id="tail" x1="0" y1="0" x2="0" y2="1">
   <stop offset="0" stop-color="#161616"/><stop offset="0.5" stop-color="#5a5a5a"/><stop offset="1" stop-color="#3a3a3a"/>
  </linearGradient>
  <linearGradient id="h2" x1="0" y1="0" x2="0" y2="1">
   <stop offset="0" stop-color="#3a3a3a"/><stop offset="0.3" stop-color="#626262"/><stop offset="1" stop-color="#6e6e6e"/>
  </linearGradient>
  <filter id="bl" x="-50%" y="-50%" width="200%" height="200%"><feGaussianBlur stdDeviation="7"/></filter>
  <filter id="bl3" x="-50%" y="-50%" width="200%" height="200%"><feGaussianBlur stdDeviation="3"/></filter>
  <filter id="bl1" x="-20%" y="-20%" width="140%" height="140%"><feGaussianBlur stdDeviation="0.4"/></filter>
 </defs>
 <rect x="542" y="187" width="339" height="420" fill="url(#bg)"/>
 <!-- soft shading -->
 <g filter="url(#bl)" opacity="0.4">
  <path d="M716 330 L750 340 L745 375 L735 395 L720 370 Z" fill="#b4b4b4"/>
  <path d="M758 338 L795 336 L800 350 L770 365 L752 380 Z" fill="#bcbcbc"/>
  <path d="M700 350 L712 335 L728 360 L715 410 L698 430 Z" fill="#d0d0d0"/>
  <path d="M692 470 L712 440 L725 470 L705 500 L690 512 Z" fill="#c0c0c0"/>
  <path d="M616 472 L636 468 L640 520 L630 555 L620 520 Z" fill="#cccccc"/>
  <path d="M668 290 L690 300 L700 320 L665 320 Z" fill="#d2d2d2"/>
  <path d="M760 400 L800 420 L790 440 L750 420 Z" fill="#d4d4d4"/>
 </g>
 <g filter="url(#bl3)" opacity="0.55" fill="none" stroke="#b8b8b8" stroke-width="7" stroke-linecap="round">
  <path d="M612 374 L633 372.5 L662 371"/>
  <path d="M756 368 L747 390 L724 420 L712 445 L703 465"/>
  <path d="M743 392 L770 405 L795 420 L828 438"/>
  <path d="M666 275 L680 290 L692 310 L708 328"/>
  <path d="M618 470 L620 500 L624 540"/>
  <path d="M700 470 L690 490 L702 500"/>
  <path d="M585 412 L603 411"/>
 </g>
 <!-- very faint cracks -->
 <g fill="none" stroke="#c6c6c6" stroke-width="0.8" stroke-linecap="round" stroke-linejoin="round">
  <path d="M587.6 254.5 L594.3 256.2 L602.8 255.4 L612.9 252 L621.3 247 L631.5 239.3 L641.6 235.1 L662 236" stroke="#bcbcbc"/>
  <path d="M640 217 L674.8 216 L693 192.3" stroke="#d2d2d2"/>
  <path d="M760 262 L746 263.7"/>
  <path d="M763 323 L762 309 L764 289.5 L770 270"/>
  <path d="M727 322 L726 305"/>
  <path d="M814 349 L830.9 349 L849.5 354 L869.7 359"/><path d="M797.1 305 L790.4 320.3 L785.3 327"/><path d="M802.2 347 L790.4 360.8 L788.7 370.9"/>
  <path d="M661.6 367.3 L667.6 382 L674.4 400" stroke="#d4d4d4"/>
  <path d="M580.8 408.9 L578.3 425"/>
  <path d="M600 507.5 L618.4 506 M610 535 L620.6 533.1 M670.3 534.6 L677.9 536.1 M655.5 552.6 L661.5 558.5"/>
  <path d="M794.4 414.8 L799 402 L805 393 M794.4 414.8 L790 440"/>
  <path d="M816.5 236 L797.1 220.8 L783.6 207.3" stroke="#d4d4d4"/>
  <path d="M745.8 264.8 L800 262" stroke="#d0d0d0"/>
 </g>
 <g fill="none" stroke="#a0a0a0" stroke-width="0.9" stroke-linecap="round" stroke-linejoin="round">
  <path d="M604 255.4 L604.4 271.4 L607.8 288.3 L611.2 307 L612.9 325.3" stroke="#a6a6a6"/><path d="M612.9 325.3 L609.5 359 L608.7 369.2" stroke="#5a5a5a" stroke-width="1"/><path d="M608.7 369.2 L606.1 392.8 L603.6 408 L605 436.4" stroke="#3a3a3a" stroke-width="1.1"/><path d="M605 436.4 L607.9 455.8 L612.4 465.9" stroke="#181818" stroke-width="1.8"/>
  <path d="M731.5 216 L738.8 232.6 L745.2 247.2 L746 263.7 L737 265.5"/>
  <path d="M798 307 L799.7 283.2 L802.2 264.6 L808.9 249.4 L816.5 236" stroke="#b0b0b0"/>
  <path d="M686.6 293 L680 298.4 L663.8 311.2 L651.8 317"/>
  <path d="M683 282.9 L697 274.6"/>
  <path d="M571 461 L606.5 458"/>
  <path d="M662 367.2 L677.7 358.2 L691.2 351.5" stroke="#444" stroke-width="1"/><path d="M691.2 351.5 L697 344 L707 336 L714 327.5" stroke="#b0b0b0" stroke-width="0.9"/><path d="M662 367.2 L667.6 376 L675.5 385" stroke="#888"/>
  <path d="M816.5 236 L830.9 246.1 L844.4 251.1 L854.5 256.2 L859.6 263" stroke="#5a5a5a"/>
 </g>
 <!-- dark cracks -->
 <g fill="none" stroke="#151515" stroke-linecap="round" stroke-linejoin="round">
  <path d="M660 261.8 L671 272.8" stroke-width="0.8" stroke="#444"/>
  <path d="M671 272.8 L683 282.9 L686.6 293 L697 305.3" stroke-width="1.7"/>
  <path d="M697 305.3 L712 324.8" stroke-width="1.3"/>
  <path d="M686.6 293 L680 298.4" stroke-width="1.1"/>
  <path d="M608.7 369.2 L623 369.2 L633.1 367.5 L646.6 368.4 L662 366.7" stroke-width="1.5"/>
  
  <path d="M793.8 333.8 L802.2 343.9 L808 347" stroke-width="1.8"/><path d="M808 347 L814 349" stroke-width="1"/>
  <path d="M751 366 L746.3 376 L741.3 386.3 L732.9 396.9 L718.8 416.6" stroke-width="1.1" stroke="#333"/><path d="M718.8 416.6 L707.5 439.1 L701.9 453.2 L696.3 464.4 L686.4 468.6" stroke-width="2"/>
  
  
  <path d="M741.3 386.3 L752.2 391.9 L768 400" stroke-width="1.2"/>
  <path d="M768 400 L771.8 399.6 L782 408 L793.8 414.8 L802.2 420 L812 425" stroke-width="1.8"/>
  <path d="M812 425 L830 433.3" stroke-width="1"/>
  <path d="M553.8 406.3 L569 407.2 L582.5 408.9 L592.6 408 L603.6 407.2" stroke-width="1.4"/>
  <path d="M612.4 465.9 L612 470.7 L616.3 491 L618.4 500 L619.9 515 L620.6 533.1 L625.2 543.7 L624.4 549.7 L626.7 563.2" stroke-width="1.8"/>
  <path d="M626.7 563.2 L625.9 572.3 L627.4 585.8" stroke-width="0.9"/>
  <path d="M612.4 465.9 L627 463.6 L641.7 464.2 L664.2 460.8 L678.8 467 L686.7 469.3" stroke-width="1.5"/>
  <path d="M681 495.2 L674.9 500 L670.3 515 L667.3 530.1 L661.3 540.6" stroke-width="1.9"/>
  <path d="M661.3 540.6 L653.8 551.2 L643.2 558.7 L638.7 562.5 L627.4 563.2" stroke-width="1.1"/>
  <path d="M690 488.4 L701.3 496.3" stroke-width="1.3" stroke="#333"/>
 </g>
<!-- hole 1 -->
 <path d="M749.2 339 L763 337.6 L757 345 L753.5 358 L751 368 L749.5 352 Z" fill="url(#tail)" filter="url(#bl1)"/>
 <path d="M712 324.8 L726.6 322.8 L739.4 324.8 L763 323.3 L768.9 326.7 L784.6 327.2 L798.4 336.6 L798.4 338.2 L786.6 331.5 L768.9 333.3 L763 337.6 L757 342.5 L749.2 339.5 L739.4 333.6 L724.6 328.7 L712.8 327.2 Z" fill="#111"/>
 <!-- hole 2 -->
 <path d="M641.7 464.2 L652.9 462.5 L664.2 460.8 L678.8 467 L686.7 469.3 L676.6 478.3 L681 495.2 L674.3 500.8 L672 496.3 L658.5 491.8 L648.4 488.4 L643.9 476 Z" fill="url(#h2)"/>
 <path d="M676.6 478.3 L686.7 469.3 L691.2 468 L689 487.3 L681 494 Z" fill="#e2e2e2"/>
</svg>

</body></html>
